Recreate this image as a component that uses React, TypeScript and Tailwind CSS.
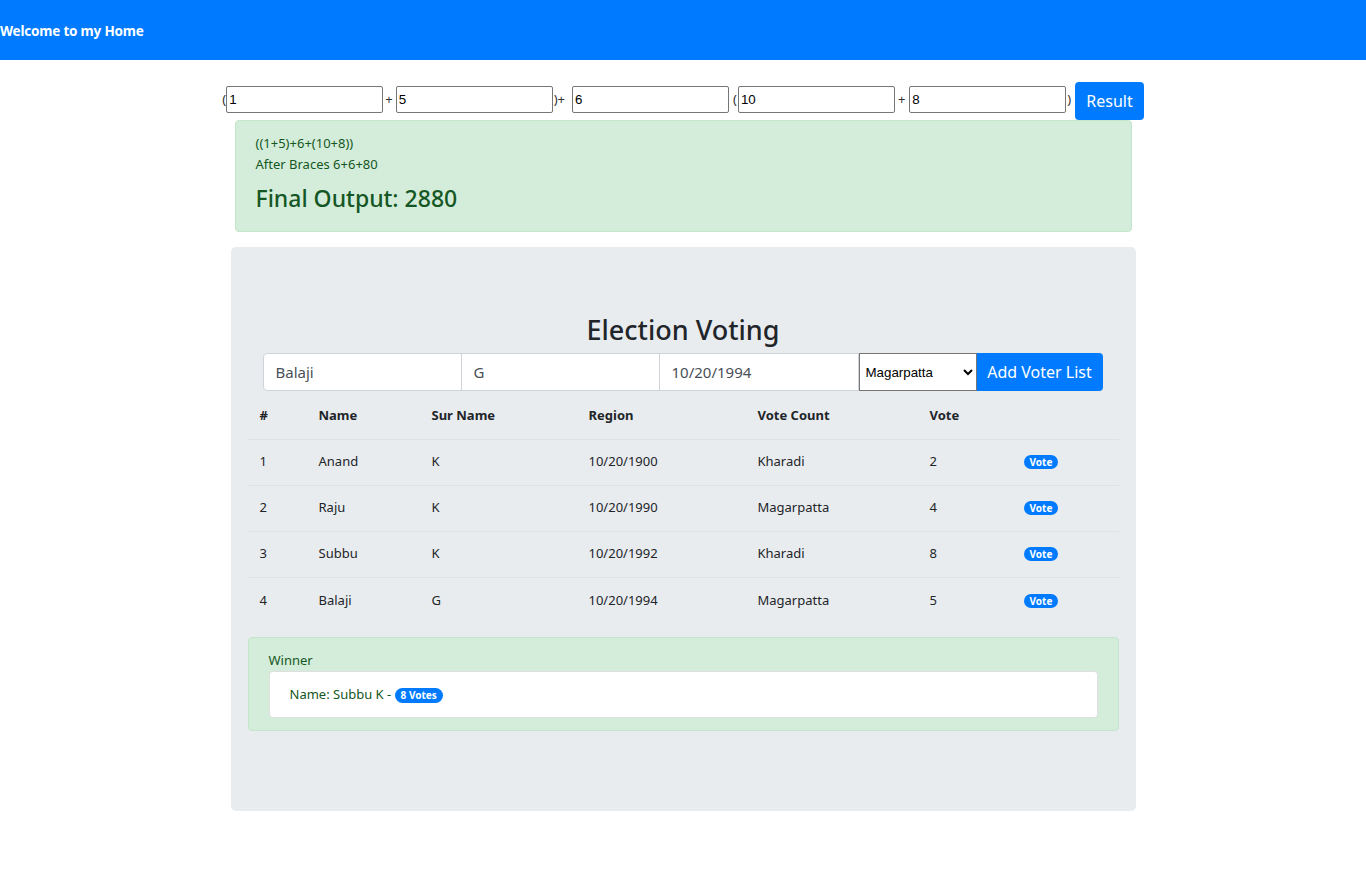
import React from "react";

const voters = [
  { id: 1, name: "Anand", sur: "K", dob: "10/20/1900", region: "Kharadi", votes: 2 },
  { id: 2, name: "Raju", sur: "K", dob: "10/20/1990", region: "Magarpatta", votes: 4 },
  { id: 3, name: "Subbu", sur: "K", dob: "10/20/1992", region: "Kharadi", votes: 8 },
  { id: 4, name: "Balaji", sur: "G", dob: "10/20/1994", region: "Magarpatta", votes: 5 },
];

function NumBox({ value }: { value: string }) {
  return (
    <input
      type="text"
      defaultValue={value}
      className="mt-1 w-[157px] h-[27px] border border-[#767676] rounded-[2px] bg-white px-[2px] text-[13.33px] text-black outline-none"
      style={{ fontFamily: '"Liberation Sans", Arial, sans-serif' }}
    />
  );
}

export default function App() {
  return (
    <div className="min-h-[875px] bg-white text-[#212529]" style={{ fontFamily: '"Noto Sans", "Open Sans", sans-serif' }}>
      {/* Navbar */}
      <header className="h-[60px] bg-[#007bff] flex items-center pt-[3px]">
        <span className="text-white font-bold text-[13.5px] tracking-[-0.2px]">Welcome to my Home</span>
      </header>

      {/* Calculator row */}
      <div className="flex items-start justify-center mt-[22px] text-[13px] text-[#333]">
        <span className="mt-[8px]">(</span>
        <NumBox value="1" />
        <span className="mt-[8px] pl-[2px] pr-[3px]">+</span>
        <NumBox value="5" />
        <span className="mt-[8px] pl-[1px] pr-[7px]">)+</span>
        <NumBox value="6" />
        <span className="mt-[8px] pl-[4px] pr-[1px]">(</span>
        <NumBox value="10" />
        <span className="mt-[8px] pl-[3px] pr-[4px]">+</span>
        <NumBox value="8" />
        <span className="mt-[8px] pl-[1px] pr-[4px]">)</span>
        <button className="h-[38px] px-[11px] rounded-[4px] bg-[#007bff] text-white text-[16px]">Result</button>
      </div>

      {/* Output alert */}
      <div className="mx-auto w-[897px] border border-[#c3e6cb] bg-[#d4edda] text-[#155724] rounded-[4px] px-5 pt-[12px] pb-[18px] text-[13px] leading-[21px]">
        <div>((1+5)+6+(10+8))</div>
        <div>After Braces 6+6+80</div>
        <h4 className="mt-[9px] text-[23px] leading-[29px] font-medium">Final Output: 2880</h4>
      </div>

      {/* Jumbotron */}
      <div className="mx-auto mt-[15px] w-[905px] bg-[#e9ecef] rounded-[5px] px-8 pt-[64px] pb-[80px]">
        <h2 className="text-center text-[27px] leading-[38px] font-medium text-[#212529]">Election Voting</h2>
        <div className="flex h-[38px] mt-[4px]">
          <input
            defaultValue="Balaji"
            className="w-[199px] bg-white border border-[#ced4da] rounded-l-[4px] px-3 text-[15px] text-[#495057] outline-none"
          />
          <input
            defaultValue="G"
            className="w-[199px] -ml-px bg-white border border-[#ced4da] px-3 text-[15px] text-[#495057] outline-none"
          />
          <input
            defaultValue="10/20/1994"
            className="w-[200px] -ml-px bg-white border border-[#ced4da] px-3 text-[15px] text-[#495057] outline-none"
          />
          <select
            defaultValue="Magarpatta"
            className="w-[118px] bg-white border border-[#767676] text-[13.33px] text-black px-[2px]"
            style={{ fontFamily: '"Liberation Sans", Arial, sans-serif' }}
          >
            <option>Kharadi</option>
            <option>Magarpatta</option>
          </select>
          <button className="w-[126px] bg-[#007bff] text-white text-[16px] rounded-r-[4px]">Add Voter List</button>
        </div>

        <div className="-mx-[15px] mt-[2px]">
          <table className="w-[871px] text-[13px] text-[#212529] border-collapse">
            <thead>
              <tr className="h-[46px] border-b border-[#dee2e6] text-left">
                <th className="w-[59px] px-3 font-bold">#</th>
                <th className="w-[113px] px-3 font-bold">Name</th>
                <th className="w-[157px] px-3 font-bold">Sur Name</th>
                <th className="w-[169px] px-3 font-bold">Region</th>
                <th className="w-[172px] px-3 font-bold">Vote Count</th>
                <th className="w-[94px] px-3 font-bold">Vote</th>
                <th className="px-3"></th>
              </tr>
            </thead>
            <tbody>
              {voters.map((v, i) => (
                <tr key={v.id} className={"h-[46px] " + (i < voters.length - 1 ? "border-b border-[#dee2e6]" : "")}>
                  <td className="px-3">{v.id}</td>
                  <td className="px-3">{v.name}</td>
                  <td className="px-3">{v.sur}</td>
                  <td className="px-3">{v.dob}</td>
                  <td className="px-3">{v.region}</td>
                  <td className="px-3">{v.votes}</td>
                  <td className="px-3">
                    <span className="inline-block rounded-full bg-[#007bff] text-white text-[10px] font-bold leading-[14px] px-[6px]">Vote</span>
                  </td>
                </tr>
              ))}
            </tbody>
          </table>

          <div className="mt-[14px] border border-[#c3e6cb] bg-[#d4edda] text-[#155724] rounded-[4px] px-5 pt-3 pb-3 text-[13px] leading-[21px]">
            <div>Winner</div>
            <div className="bg-white border border-[rgba(0,0,0,0.125)] rounded-[4px] px-5 py-3">
              Name: Subbu K -{" "}
              <span className="inline-block rounded-full bg-[#007bff] text-white text-[10px] font-bold leading-[15px] px-[6px]">8 Votes</span>
            </div>
          </div>
        </div>
      </div>
    </div>
  );
}
